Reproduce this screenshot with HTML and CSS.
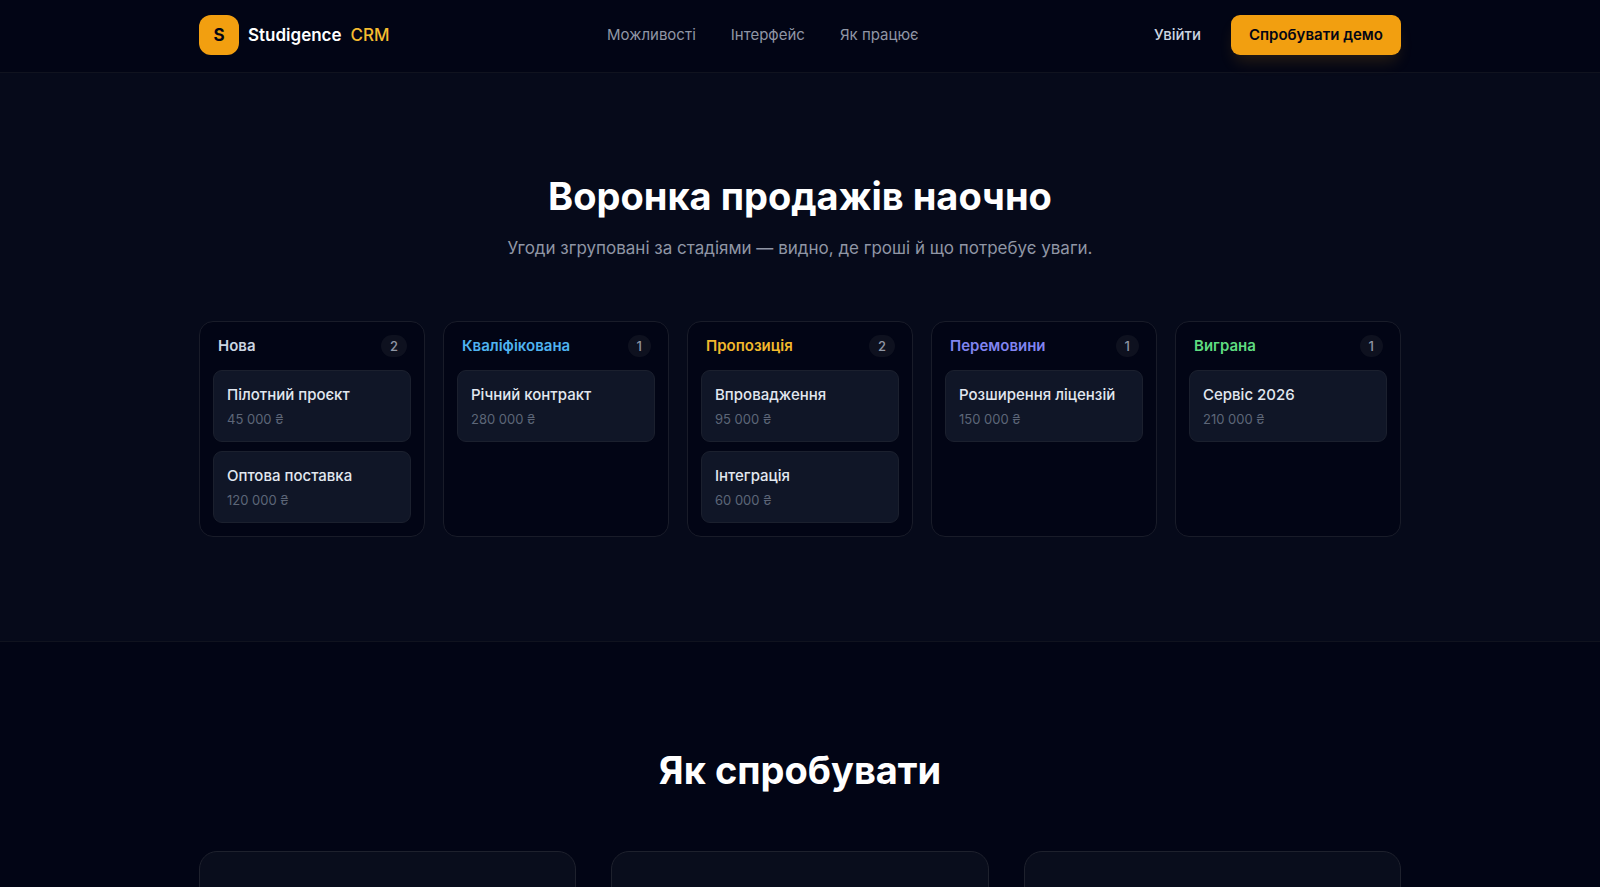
FILE: index.html
```
<!DOCTYPE html>
<html lang="uk">
<head>
<meta charset="utf-8">
<meta name="viewport" content="width=device-width, initial-scale=1">
<title>Studigence CRM</title>
<link rel="stylesheet" href="styles.css">
</head>
<body>
<header class="header">
  <div class="container header-row">
    <a class="brand" href="#"><span class="brand-mark">S</span><span class="brand-name">Studigence</span><span class="brand-accent">CRM</span></a>
    <nav class="nav">
      <a href="#features">Можливості</a>
      <a href="#funnel">Інтерфейс</a>
      <a href="#how">Як працює</a>
    </nav>
    <div class="actions">
      <a class="login" href="#login">Увійти</a>
      <button class="cta" type="button">Спробувати демо</button>
    </div>
  </div>
</header>
<main>
  <section class="funnel" id="funnel">
    <div class="container">
      <h2 class="title">Воронка продажів наочно</h2>
      <p class="subtitle">Угоди згруповані за стадіями — видно, де гроші й що потребує уваги.</p>
      <div class="board">
        <section class="column">
          <div class="column-head"><h3 class="stage stage-new">Нова</h3><span class="count">2</span></div>
          <article class="deal"><p class="deal-name">Пілотний проєкт</p><p class="deal-sum">45 000 ₴</p></article>
          <article class="deal"><p class="deal-name">Оптова поставка</p><p class="deal-sum">120 000 ₴</p></article>
        </section>
        <section class="column">
          <div class="column-head"><h3 class="stage stage-qualified">Кваліфікована</h3><span class="count">1</span></div>
          <article class="deal"><p class="deal-name">Річний контракт</p><p class="deal-sum">280 000 ₴</p></article>
        </section>
        <section class="column">
          <div class="column-head"><h3 class="stage stage-proposal">Пропозиція</h3><span class="count">2</span></div>
          <article class="deal"><p class="deal-name">Впровадження</p><p class="deal-sum">95 000 ₴</p></article>
          <article class="deal"><p class="deal-name">Інтеграція</p><p class="deal-sum">60 000 ₴</p></article>
        </section>
        <section class="column">
          <div class="column-head"><h3 class="stage stage-talks">Перемовини</h3><span class="count">1</span></div>
          <article class="deal"><p class="deal-name">Розширення ліцензій</p><p class="deal-sum">150 000 ₴</p></article>
        </section>
        <section class="column">
          <div class="column-head"><h3 class="stage stage-won">Виграна</h3><span class="count">1</span></div>
          <article class="deal"><p class="deal-name">Сервіс 2026</p><p class="deal-sum">210 000 ₴</p></article>
        </section>
      </div>
    </div>
  </section>
  <section class="how" id="how">
    <div class="container">
      <h2 class="title">Як спробувати</h2>
      <div class="steps">
        <div class="step"></div>
        <div class="step"></div>
        <div class="step"></div>
      </div>
    </div>
  </section>
</main>
</body>
</html>
```
FILE: styles.css
```
* { box-sizing: border-box; margin: 0; padding: 0; }
html { overflow-x: hidden; scrollbar-width: none; }
body {
  background: #020515;
  color: #e2e8f0;
  font-family: Inter, "Noto Sans", sans-serif;
  font-size: 16px;
  line-height: 24px;
}
a { color: inherit; text-decoration: none; }
.container { max-width: 1250px; margin: 0 auto; padding: 0 24px; }

.header {
  position: sticky;
  top: 0;
  z-index: 10;
  padding: 15px 0 17px;
  background: #020515;
  border-bottom: 1px solid #10131f;
}
.header-row { display: flex; align-items: center; justify-content: space-between; }
.brand { display: flex; align-items: center; gap: 9px; font-size: 17px; font-weight: 600; color: #fff; }
.brand-mark {
  display: grid;
  place-items: center;
  width: 40px;
  height: 40px;
  border-radius: 12px;
  background: #f29f10;
  color: #020515;
  font-weight: 700;
}
.brand-accent { color: #f5bc30; font-weight: 500; }
.nav { display: flex; gap: 35px; color: #9096a5; }
.nav, .actions { font-size: 15px; }
.actions { display: flex; align-items: center; gap: 12px; }
.login { padding: 0 18px; font-weight: 500; color: #cbd5e1; }
.cta {
  height: 40px;
  padding: 0 18px;
  border: 0;
  border-radius: 9px;
  background: #f29f10;
  color: #020515;
  font: inherit;
  font-weight: 600;
  box-shadow: 0 10px 16px -4px rgba(242, 159, 16, 0.16);
}

.funnel { padding: 100px 0 104px; background: #060a1a; border-bottom: 1px solid #10131f; }
.title { font-size: 38px; line-height: 46px; font-weight: 700; color: #fff; text-align: center; }
.subtitle { margin-top: 15px; font-size: 17px; line-height: 28px; color: #9096a5; text-align: center; }
.board { display: grid; grid-template-columns: repeat(5, 1fr); gap: 18px; margin-top: 59px; }
.column {
  display: flex;
  flex-direction: column;
  gap: 9px;
  padding: 13px;
  border: 1px solid #191c29;
  border-radius: 14px;
  background: #020515;
}
.column-head { display: flex; align-items: center; justify-content: space-between; padding: 0 4px 0 5px; margin-bottom: 4px; }
.stage { font-size: 15px; line-height: 22px; font-weight: 600; }
.stage-new { color: #cbd5e1; }
.stage-qualified { color: #4fb3f0; }
.stage-proposal { color: #f2b92c; }
.stage-talks { color: #8184f0; }
.stage-won { color: #5fdc80; }
.count { padding: 0 9px; border-radius: 11px; background: #0e111f; font-size: 13px; line-height: 22px; font-weight: 500; color: #9096a5; }
.deal { padding: 13px; border: 1px solid #1b202e; border-radius: 9px; background: #101627; }
.deal-name { font-size: 15px; line-height: 22px; font-weight: 500; }
.deal-sum { margin-top: 4px; font-size: 13px; line-height: 18px; color: #5d6678; }

.how { padding: 105px 0; }
.steps { display: grid; grid-template-columns: repeat(3, 1fr); gap: 35px; margin-top: 58px; }
.step { min-height: 240px; border: 1px solid #1e212d; border-radius: 18px; background: #090d1c; }
```
